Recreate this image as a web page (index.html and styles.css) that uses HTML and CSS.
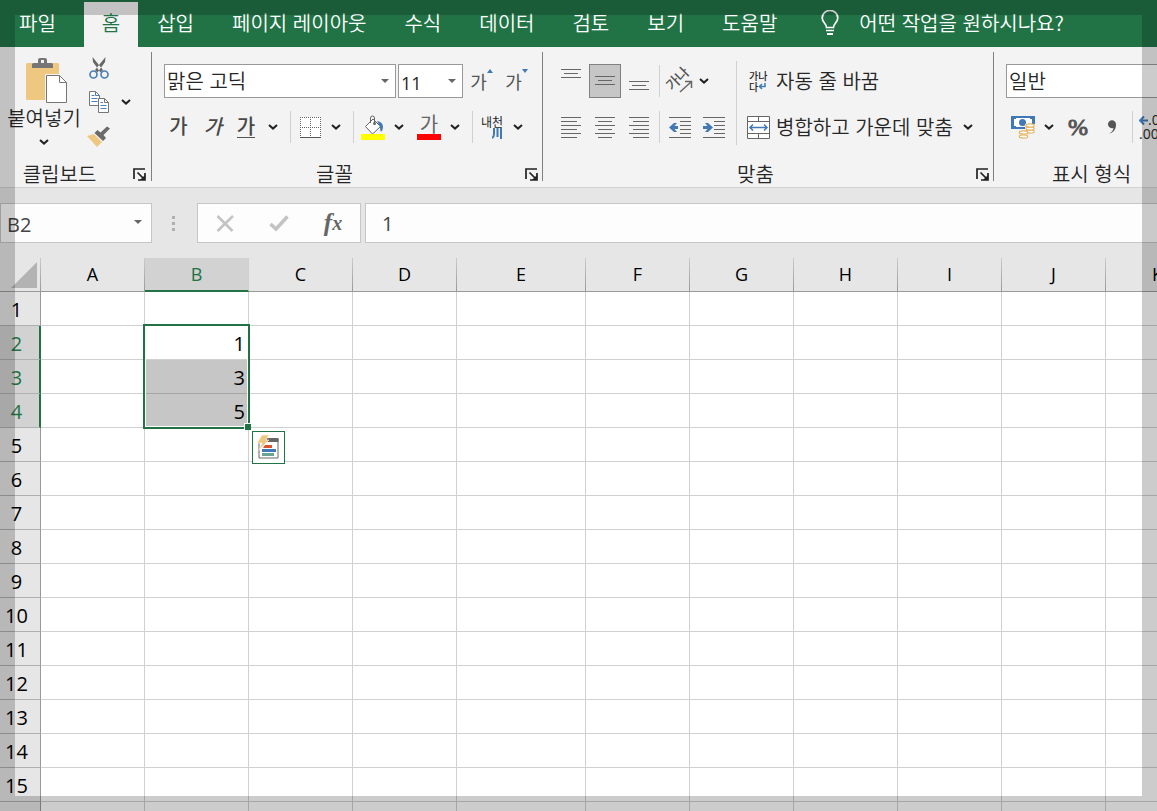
FILE: index.html
```html
<!DOCTYPE html>
<html lang="ko">
<head>
<meta charset="utf-8">
<title>스프레드시트</title>
<link rel="stylesheet" href="styles.css">
</head>
<body>
<svg class="defs" aria-hidden="true">
  <symbol id="caret" viewBox="0 0 10 6"><path d="M1 1l4 3.6L9 1" fill="none" stroke="#222" stroke-width="2"/></symbol>
  <symbol id="drop" viewBox="0 0 8 4"><path d="M0 0h8L4 4z" fill="#666"/></symbol>
  <symbol id="launch" viewBox="0 0 13 13"><path d="M1 11V1h11M4.500 4.500l6 6M12 5v7H5" fill="none" stroke="#222" stroke-width="1.700"/><path d="M12 7v5H7z" fill="#222"/></symbol>
</svg>
<div class="app">
  <header class="tabs">
    <button class="tab file">파일</button>
    <button class="tab active">홈</button>
    <button class="tab">삽입</button>
    <button class="tab">페이지 레이아웃</button>
    <button class="tab">수식</button>
    <button class="tab">데이터</button>
    <button class="tab">검토</button>
    <button class="tab">보기</button>
    <button class="tab">도움말</button>
    <button class="tell">
      <svg width="18" height="26" viewBox="0 0 18 26"><path d="M5.500 17.500c0-4-4.300-5-4.300-9.500a7.600 7.300 0 0 1 15.600 0c0 4.500-4.300 5.500-4.300 9.500zM5 20.500h8" fill="none" stroke="#fff" stroke-width="1.700"/><path d="M6 23h6v2H6z" fill="#fff"/></svg>
      <span>어떤 작업을 원하시나요?</span>
    </button>
  </header>

  <div class="ribbon">
    <section class="group clipboard">
      <div class="body">
        <button class="paste">
          <svg width="42" height="48" viewBox="0 0 42 48"><rect x="0" y="6" width="33" height="37" rx="1.500" fill="#eec880"/><path d="M6 11V7.500Q6 6 7.500 6H12V3q0-2 2-2h5q2 0 2 2v3h4.500Q27 6 27 7.500V11z" fill="#767676"/><rect x="15" y="3" width="3" height="3" fill="#f3f3f3"/><path d="M19 17h17l6 8v22H19z" fill="#f3f3f3"/><path d="M20.500 18.500h13l7 7v20h-20z" fill="#fff" stroke="#767676"/><path d="M33.500 18.500v7h7" fill="none" stroke="#767676"/></svg>
          <span>붙여넣기</span>
          <svg width="10" height="6"><use href="#caret"/></svg>
        </button>
        <div class="stack">
          <button aria-label="잘라내기"><svg width="21" height="22" viewBox="0 0 21 22"><path d="M3.500 0l.5 5 7.500 10.500 2.500-2.500zM16.500 0L16 5 8.500 15.500 6 13z" fill="#666"/><circle cx="4.500" cy="17.500" r="3.500" fill="none" stroke="#4c7fb8" stroke-width="1.700"/><circle cx="15.500" cy="17.500" r="3.500" fill="none" stroke="#4c7fb8" stroke-width="1.700"/></svg></button>
          <div class="pair"><button aria-label="복사"><svg width="21" height="22" viewBox="0 0 21 22"><path d="M.5.500h6l4 4v10H.500z" fill="#fff" stroke="#767676"/><path d="M6.500.500v4h4M2.500 4.500h3M2.500 7.500h6M2.500 10.500h6" fill="none" stroke="#4c7fb8"/><path d="M9.500 7.500h6l4 4v10h-10z" fill="#fff" stroke="#767676"/><path d="M15.500 7.500v4h4" fill="none" stroke="#767676"/><path d="M11.500 11.500h2.500M11.500 14.500h6M11.500 17.500h6" stroke="#4c7fb8"/></svg></button><button class="caret copycaret" aria-label="복사 옵션"><svg width="10" height="6"><use href="#caret"/></svg></button></div>
          <button aria-label="서식 복사"><svg width="24" height="22" viewBox="0 0 24 22"><path d="M0 11l7-2 8 8-5 5z" fill="#eec880"/><path d="M7.500 8l3-3 3 2.500L20 1.500l3 2-6.500 6.500 2.500 3-3 3z" fill="#6a6a6a"/></svg></button>
        </div>
      </div>
      <div class="foot"><span>클립보드</span><button aria-label="클립보드 설정"><svg width="13" height="13"><use href="#launch"/></svg></button></div>
    </section>

    <section class="group font">
      <div class="body">
        <div class="row boxes">
          <label class="combo name"><select aria-label="글꼴 이름"><option>맑은 고딕</option></select><svg width="8" height="4"><use href="#drop"/></svg></label>
          <label class="combo size"><select aria-label="글꼴 크기"><option>11</option></select><svg width="8" height="4"><use href="#drop"/></svg></label>
          <button class="resize" aria-label="글꼴 크게"><span>가</span><svg width="6" height="4" viewBox="0 0 6 4"><path d="M0 4h6L3 0z" fill="#4079b5"/></svg></button>
          <button class="resize" aria-label="글꼴 작게"><span>가</span><svg width="6" height="4" viewBox="0 0 6 4"><path d="M0 0h6L3 4z" fill="#4079b5"/></svg></button>
        </div>
        <div class="row">
          <button class="letter">가</button>
          <button class="letter italic">가</button>
          <button class="letter under"><span>가</span></button>
          <button class="caret" aria-label="밑줄 옵션"><svg width="10" height="6"><use href="#caret"/></svg></button>
          <i class="sep"></i>
          <div class="pair"><button class="tool" aria-label="테두리"><svg width="21" height="21" viewBox="0 0 21 21"><path d="M0 0h21v21H0z" fill="#fff"/><path d="M0 .5h21M0 10.500h21M.5 0v20M10.500 0v20M20.500 0v20" stroke="#666" stroke-dasharray="1 1"/><path d="M0 20.500h21" stroke="#555"/></svg></button><button class="caret" aria-label="테두리 옵션"><svg width="10" height="6"><use href="#caret"/></svg></button></div>
          <i class="sep"></i>
          <div class="pair"><button class="tool" aria-label="채우기 색"><svg width="24" height="25" viewBox="0 0 24 25"><path d="M4.500 11.500L12 4l7.500 7.500L11.500 19z" fill="#fff" stroke="#666"/><path d="M9.500 8V3q0-2 2-2t2 2v5" fill="none" stroke="#666"/><circle cx="13.500" cy="8.500" r="1.500" fill="#666"/><path d="M16 6q6 1 6 6 0 3-2 5-1-2-1-5z" fill="#4079b5"/><path d="M0 19h24v6H0z" fill="#ff0"/></svg></button><button class="caret" aria-label="채우기 옵션"><svg width="10" height="6"><use href="#caret"/></svg></button></div>
          <div class="pair next"><button class="tool color" aria-label="글꼴 색"><span>가</span></button><button class="caret" aria-label="글꼴 색 옵션"><svg width="10" height="6"><use href="#caret"/></svg></button></div>
          <i class="sep"></i>
          <div class="pair"><button class="tool phonetic" aria-label="윗주"><span>내천</span><svg width="10" height="11" viewBox="0 0 10 11"><path d="M2 0v6q0 3-2 4M5.500 0v9M9 0v11" fill="none" stroke="#4079b5" stroke-width="2"/></svg></button><button class="caret" aria-label="윗주 옵션"><svg width="10" height="6"><use href="#caret"/></svg></button></div>
        </div>
      </div>
      <div class="foot"><span>글꼴</span><button aria-label="글꼴 설정"><svg width="13" height="13"><use href="#launch"/></svg></button></div>
    </section>

    <section class="group align">
      <div class="body">
        <div class="half">
          <div class="row">
            <button class="cell" aria-label="위쪽 맞춤"><svg width="20" height="24" viewBox="0 0 20 24"><path d="M0 .5h20M3 4.500h14M0 8.500h20" stroke="#666"/></svg></button>
            <button class="cell on" aria-label="가운데 맞춤"><svg width="20" height="10" viewBox="0 0 20 10"><path d="M0 .5h20M3 4.500h14M0 8.500h20" stroke="#666"/></svg></button>
            <button class="cell" aria-label="아래쪽 맞춤"><svg width="20" height="20" viewBox="0 0 20 20"><path d="M0 10.500h20M3 14.500h14M0 18.500h20" stroke="#666"/></svg></button>
            <i class="sep near"></i>
            <button class="cell orient" aria-label="방향"><span>가나</span><svg width="14" height="13" viewBox="0 0 14 13"><path d="M1 12L12 2M6 1.500h6.500V8" fill="none" stroke="#666" stroke-width="1.500"/></svg></button>
            <button class="caret tight" aria-label="방향 옵션"><svg width="10" height="6"><use href="#caret"/></svg></button>
          </div>
          <div class="row">
            <button class="cell" aria-label="왼쪽 맞춤"><svg width="20" height="21" viewBox="0 0 20 21"><path d="M0 .5h20M0 4.500h16M0 8.500h20M0 12.500h16M0 16.500h20M0 20.500h16" stroke="#666"/></svg></button>
            <button class="cell" aria-label="가로 가운데"><svg width="20" height="21" viewBox="0 0 20 21"><path d="M0 .5h20M3 4.500h14M0 8.500h20M3 12.500h14M0 16.500h20M3 20.500h14" stroke="#666"/></svg></button>
            <button class="cell" aria-label="오른쪽 맞춤"><svg width="20" height="21" viewBox="0 0 20 21"><path d="M0 .5h20M4 4.500h16M0 8.500h20M4 12.500h16M0 16.500h20M4 20.500h16" stroke="#666"/></svg></button>
            <i class="sep near"></i>
            <button class="cell" aria-label="내어쓰기"><svg width="22" height="21" viewBox="0 0 22 21"><path d="M0 .5h22M11 4.500h11M11 8.500h11M11 12.500h11M11 16.500h11M0 20.500h22" stroke="#666"/><path d="M0 10.500L5 6h3L5.500 9H9v3H5.500L8 15H5z" fill="#4079b5"/></svg></button>
            <button class="cell" aria-label="들여쓰기"><svg width="22" height="21" viewBox="0 0 22 21"><path d="M0 .5h22M11 4.500h11M11 8.500h11M11 12.500h11M11 16.500h11M0 20.500h22" stroke="#666"/><path d="M10 10.500L5 6H2l2.500 3H0v3h4.500L2 15h3z" fill="#4079b5"/></svg></button>
          </div>
        </div>
        <i class="sep tall"></i>
        <div class="half">
          <div class="row">
            <button class="wide"><span class="wrapicon"><span>가나</span><span>다<svg width="8" height="7" viewBox="0 0 8 7"><path d="M7 0v3.500H1.500M4 1L1.500 3.500 4 6" fill="none" stroke="#4079b5" stroke-width="1.500"/></svg></span></span>자동 줄 바꿈</button>
          </div>
          <div class="row">
            <button class="wide"><svg width="23" height="23" viewBox="0 0 23 23"><path d="M.5.500h22v22H.500zM.5 5.500h22M.5 17.500h22M11.500.500v5M11.500 17.500v5" fill="#fff" stroke="#666"/><path d="M3 11.500h17M6 8.500l-3 3 3 3M17 8.500l3 3-3 3" fill="none" stroke="#4079b5" stroke-width="1.500"/></svg>병합하고 가운데 맞춤</button>
            <button class="caret last" aria-label="병합 옵션"><svg width="10" height="6"><use href="#caret"/></svg></button>
          </div>
        </div>
      </div>
      <div class="foot"><span>맞춤</span><button aria-label="맞춤 설정"><svg width="13" height="13"><use href="#launch"/></svg></button></div>
    </section>

    <section class="group number">
      <div class="body">
        <div class="row"><label class="combo format"><select aria-label="표시 형식"><option>일반</option></select></label></div>
        <div class="row">
          <button class="cell" aria-label="회계 표시 형식"><svg width="24" height="24" viewBox="0 0 24 24"><path d="M0 1h24v13H0z" fill="#4079b5"/><path d="M3 3h18v9H3z" fill="#fff"/><circle cx="11.500" cy="7.500" r="3.500" fill="#4079b5"/><path d="M2 2h3v2H2zM19 2h3v2h-3zM2 11h3v2H2z" fill="#4079b5"/><path d="M14 9h10v10h-5v5H8v-9h6z" fill="#f3f3f3"/><g fill="#fff" stroke="#e6b566" stroke-width="1.200"><ellipse cx="19" cy="16.500" rx="4.200" ry="1.600"/><ellipse cx="19" cy="13.500" rx="4.200" ry="1.600"/><ellipse cx="19" cy="10.500" rx="4.200" ry="1.600"/><ellipse cx="12.500" cy="21.500" rx="4.200" ry="1.600"/><ellipse cx="12.500" cy="17.500" rx="4.200" ry="1.600"/></g></svg></button>
          <button class="caret" aria-label="회계 옵션"><svg width="10" height="6"><use href="#caret"/></svg></button>
          <button class="cell percent">%</button>
          <button class="cell" aria-label="쉼표 스타일"><svg width="10" height="15" viewBox="0 0 10 15"><path d="M1 14q5-2 5.500-6A4 4 0 1 1 9 4.500Q9.500 12 1 14z" fill="#555"/></svg></button>
          <i class="sep near"></i>
          <button class="decimal" aria-label="자릿수 늘림"><span><svg width="9" height="9" viewBox="0 0 9 9"><path d="M9 4.500H1M5 .5l-4 4 4 4" fill="none" stroke="#4079b5" stroke-width="2"/></svg>.0</span><span>.00</span></button>
        </div>
      </div>
      <div class="foot"><span>표시 형식</span><button aria-label="표시 형식 설정"><svg width="13" height="13"><use href="#launch"/></svg></button></div>
    </section>
  </div>

  <div class="formula">
    <label class="namebox"><input aria-label="이름 상자" value="B2"><svg width="8" height="4"><use href="#drop"/></svg></label>
    <svg class="dots" width="3" height="15" viewBox="0 0 3 15"><path d="M0 0h3v3H0zM0 6h3v3H0zM0 12h3v3H0z" fill="#b0b0b0"/></svg>
    <div class="actions">
      <button aria-label="취소"><svg width="19" height="17" viewBox="0 0 19 17"><path d="M1.500 1l15 15M17 1L1.500 16" stroke="#c3c3c3" stroke-width="2.500"/></svg></button>
      <button aria-label="입력"><svg width="20" height="17" viewBox="0 0 20 17"><path d="M1.500 9l5.500 5L18.500 1.500" fill="none" stroke="#c3c3c3" stroke-width="3.500"/></svg></button>
      <button class="fx" aria-label="함수 삽입"><span>f</span><small>x</small></button>
    </div>
    <input class="entry" aria-label="수식 입력줄" value="1">
  </div>

  <div class="sheet">
    <table>
      <colgroup><col class="c-head"><col><col><col><col><col class="c-wide"><col><col><col><col><col><col></colgroup>
      <thead><tr><th class="corner"><svg width="26" height="26" viewBox="0 0 26 26"><path d="M26 0v26H0z" fill="#b3b3b3"/></svg></th><th>A</th><th class="sel">B</th><th>C</th><th>D</th><th>E</th><th>F</th><th>G</th><th>H</th><th>I</th><th>J</th><th>K</th></tr></thead>
      <tbody>
        <tr><th>1</th><td></td><td></td><td></td><td></td><td></td><td></td><td></td><td></td><td></td><td></td><td></td></tr>
        <tr><th class="sel">2</th><td></td><td class="anchor">1<div class="range"><i class="handle"></i><button class="quick" aria-label="빠른 분석"><svg width="22" height="24" viewBox="0 0 22 24"><path d="M2 8v15h19V4H9" fill="#fff" stroke="#666"/><path d="M10 3h11.500v4H10z" fill="#666"/><path d="M8 10h7v3H6z" fill="#d9532c"/><path d="M5 14h14v3H5z" fill="#4079b5"/><path d="M5 18h12v3H5z" fill="#6aa392"/><path d="M5 0h7L9 5h3L2 15l3-7H0z" fill="#eec880" stroke="#fff" stroke-width=".5"/></svg></button></div></td><td></td><td></td><td></td><td></td><td></td><td></td><td></td><td></td><td></td></tr>
        <tr><th class="sel">3</th><td></td><td class="fill">3</td><td></td><td></td><td></td><td></td><td></td><td></td><td></td><td></td><td></td></tr>
        <tr><th class="sel">4</th><td></td><td class="fill">5</td><td></td><td></td><td></td><td></td><td></td><td></td><td></td><td></td><td></td></tr>
        <tr><th>5</th><td></td><td></td><td></td><td></td><td></td><td></td><td></td><td></td><td></td><td></td><td></td></tr>
        <tr><th>6</th><td></td><td></td><td></td><td></td><td></td><td></td><td></td><td></td><td></td><td></td><td></td></tr>
        <tr><th>7</th><td></td><td></td><td></td><td></td><td></td><td></td><td></td><td></td><td></td><td></td><td></td></tr>
        <tr><th>8</th><td></td><td></td><td></td><td></td><td></td><td></td><td></td><td></td><td></td><td></td><td></td></tr>
        <tr><th>9</th><td></td><td></td><td></td><td></td><td></td><td></td><td></td><td></td><td></td><td></td><td></td></tr>
        <tr><th>10</th><td></td><td></td><td></td><td></td><td></td><td></td><td></td><td></td><td></td><td></td><td></td></tr>
        <tr><th>11</th><td></td><td></td><td></td><td></td><td></td><td></td><td></td><td></td><td></td><td></td><td></td></tr>
        <tr><th>12</th><td></td><td></td><td></td><td></td><td></td><td></td><td></td><td></td><td></td><td></td><td></td></tr>
        <tr><th>13</th><td></td><td></td><td></td><td></td><td></td><td></td><td></td><td></td><td></td><td></td><td></td></tr>
        <tr><th>14</th><td></td><td></td><td></td><td></td><td></td><td></td><td></td><td></td><td></td><td></td><td></td></tr>
        <tr><th>15</th><td></td><td></td><td></td><td></td><td></td><td></td><td></td><td></td><td></td><td></td><td></td></tr>
        <tr><th></th><td></td><td></td><td></td><td></td><td></td><td></td><td></td><td></td><td></td><td></td><td></td></tr>
      </tbody>
    </table>
  </div>
</div>
<div class="frame"></div>
</body>
</html>
```
FILE: styles.css
```css
* { box-sizing: border-box; }
body {
  margin: 0;
  overflow: hidden;
  background: #fff;
  color: #262626;
  font: 350 20px/24px "Noto Sans CJK KR", "Open Sans", sans-serif;
}
button, input, select { font: inherit; color: inherit; }
button { margin: 0; padding: 0; border: 0; background: none; white-space: nowrap; }
svg { display: block; flex: none; }
.defs { position: absolute; width: 0; height: 0; }
.app { display: flex; flex-direction: column; height: 100vh; overflow: hidden; }
.frame { position: fixed; inset: 0; border: 15px solid rgba(0, 0, 0, .2); pointer-events: none; z-index: 10; }

/* tabs */
.tabs { display: flex; flex: none; height: 47px; padding-top: 2px; background: #217346; color: #fff; }
.tab { flex: none; padding: 0 19px 3px 19px; }
.tab.file { margin-right: 9px; }
.tab.active { padding: 0 18px 3px 18px; background: #f3f3f3; color: #217346; }
.tell { display: flex; flex: none; align-items: center; gap: 20px; margin-left: 25px; padding-bottom: 3px; }

/* ribbon */
.ribbon { display: flex; flex: none; background: #f3f3f3; border-bottom: 1px solid #d2d2d2; overflow: hidden; }
.group { position: relative; display: flex; flex: none; flex-direction: column; padding-right: 1px; }
.group::after { content: ""; position: absolute; right: 0; top: 5px; bottom: 6px; width: 1px; background: #808080; }
.group .body { height: 103px; padding: 11px 0 0 10px; }
.row { display: flex; align-items: center; height: 46px; }
.row button, .stack button { display: flex; flex: none; align-items: center; justify-content: center; height: 34px; }
.pair { display: flex; }
.pair.next { margin-left: 4px; }
.foot { display: flex; align-items: center; height: 37px; padding: 10px 4px 0 0; }
.foot span { flex: 1; text-align: center; }
.foot button { width: 21px; padding-top: 2px; display: flex; justify-content: flex-end; }
.sep { flex: none; width: 1px; height: 32px; margin: 0 5px; background: #d0d0d0; }
.sep.near { margin: 0 3px; }
.sep.tall { height: 84px; margin: 3px 5px 0; }
.caret { width: 24px; }
.caret.tight { width: 14px; }
.caret.last { width: 30px; }
.tool { width: 28px; }
.cell { width: 34px; }

.clipboard { width: 152px; }
.clipboard .body { display: flex; gap: 7px; padding: 4px 0 0 8px; }
.clipboard .foot { padding-right: 5px; }
.clipboard .foot span { padding-right: 6px; }
.paste { display: flex; flex-direction: column; align-items: center; width: 72px; padding-top: 6px; }
.paste svg:first-child { margin-left: 6px; }
.paste span { margin: 1px 0 9px; }
.stack button { width: 24px; height: 34px; }
.stack .copycaret { width: 30px; }

.font { width: 391px; }
.boxes { gap: 2px; padding-left: 2px; }
.combo { position: relative; display: block; flex: none; height: 34px; }
.combo select { width: 100%; height: 100%; padding: 0 2px; border: 1px solid #999; border-radius: 0; background: #fff; appearance: none; }
.combo svg { position: absolute; right: 7px; top: 15px; }
.combo.name { width: 232px; }
.combo.size { width: 65px; }
.combo.size select, .namebox input, .entry { font-family: "Open Sans", sans-serif; font-weight: 400; }
.combo.size select { font-size: 18px; padding-top: 3px; }
.combo.format { width: 190px; }
.resize { position: relative; width: 33px; padding-right: 6px; color: #555; font-size: 18px; font-weight: 400; }
.resize svg { position: absolute; right: 5px; top: 5px; }
.letter { width: 33px; padding-bottom: 2px; color: #484848; font-weight: 500; }
.letter.italic, .letter.under { padding-left: 3px; }
.italic { font-style: italic; }
.under span { border-bottom: 1px solid #555; line-height: 22px; }
.color span { height: 26px; line-height: 20px; border-bottom: 6px solid #f00; width: 24px; color: #666; font-weight: 400; }
.row .phonetic { flex-direction: column; align-items: center; font-size: 12px; line-height: 13px; font-weight: 400; }
.phonetic svg { margin-left: 10px; }

.align { width: 451px; }
.align .body { display: flex; padding-left: 11px; }
.row .on { width: 32px; margin: 0 1px; background: #c6c6c6; border: 1px solid #808080; }
.orient { position: relative; }
.orient span { transform: rotate(-45deg); font-size: 14px; line-height: 14px; margin: 0 6px 6px 0; color: #555; font-weight: 500; }
.orient svg { position: absolute; right: 4px; bottom: 5px; }
.row .wide { gap: 6px; padding-left: 5px; }
.wrapicon { display: flex; flex-direction: column; width: 23px; padding-left: 2px; font-size: 10px; line-height: 11px; font-weight: 500; }
.wrapicon span { display: flex; align-items: center; }

.number { width: 221px; }
.number .body { padding-left: 12px; }
.number .caret { width: 18px; }
.percent { margin-left: 3px; font: 24px/24px "Liberation Serif", serif; color: #555; -webkit-text-stroke: 1px #555; }
.row .decimal { flex-direction: column; align-items: flex-start; padding-left: 3px; font: 14px/14px "Open Sans", sans-serif; }
.decimal span { display: flex; align-items: center; }

/* formula bar */
.formula { display: flex; flex: none; align-items: center; padding: 15px 0; background: #e6e6e6; }
.namebox { position: relative; flex: none; width: 152px; }
.formula input { display: block; width: 100%; height: 40px; border: 1px solid #c6c6c6; background: #fdfdfd; color: #444; }
.namebox input { padding: 3px 6px 0; }
.namebox svg { position: absolute; right: 10px; top: 17px; }
.dots { margin: 0 24px 0 20px; }
.actions { display: flex; flex: none; width: 164px; height: 40px; border: 1px solid #c6c6c6; background: #fdfdfd; margin: 0 4px 0 -2px; }
.actions button { display: flex; flex: 1; align-items: center; justify-content: center; }
.fx { font: italic bold 25px/30px "Liberation Serif", serif; color: #666; }
.fx small { font-size: 20px; }
.formula .entry { flex: 1; min-width: 0; padding: 0 16px; border-right: 0; }

/* sheet */
.sheet { flex: 1; min-height: 0; overflow: hidden; }
table { table-layout: fixed; width: 1210px; border-collapse: separate; border-spacing: 0; color: #000; font: 20px/24px "Open Sans", sans-serif; }
col { width: 104px; }
.c-head { width: 41px; }
.c-wide { width: 129px; }
th, td { height: 34px; padding: 2px 0 0; border: solid #d0d0d0; border-width: 0 1px 1px 0; }
td { text-align: right; padding-right: 3px; }
th { background: #e6e6e6; font-weight: 400; }
thead th { padding: 0 0 1px; font-size: 18px; border-bottom-color: #999; border-image: linear-gradient(#ccc, #999) 1; }
thead .sel { padding: 0; background: #d2d2d2; color: #217346; border-bottom: 2px solid #217346; border-image: none; }
thead .corner { border-color: #999; }
.corner svg { margin: 2px 0 0 11px; }
tbody th { padding-right: 7px; border-color: #b0b0b0; border-right-color: #999; }
tbody .sel { background: #d2d2d2; color: #217346; border-right: 2px solid #217346; padding-right: 6px; }
.fill { background: #c6c6c6; border-bottom-color: #a6a6a6; }
.anchor { position: relative; }
.range { position: absolute; left: -2px; top: -2px; width: 107px; height: 105px; border: 2px solid #217346; box-shadow: inset 0 0 0 1px #fff; }
.handle { position: absolute; right: -3px; bottom: -3px; width: 7px; height: 7px; background: #217346; border: solid #fff; border-width: 1px 0 0 1px; }
.quick { position: absolute; left: 107px; top: 105px; width: 33px; height: 33px; display: flex; align-items: center; justify-content: center; padding: 0 2px 2px 0; background: #fff; border: 1px solid #217346; }
```
